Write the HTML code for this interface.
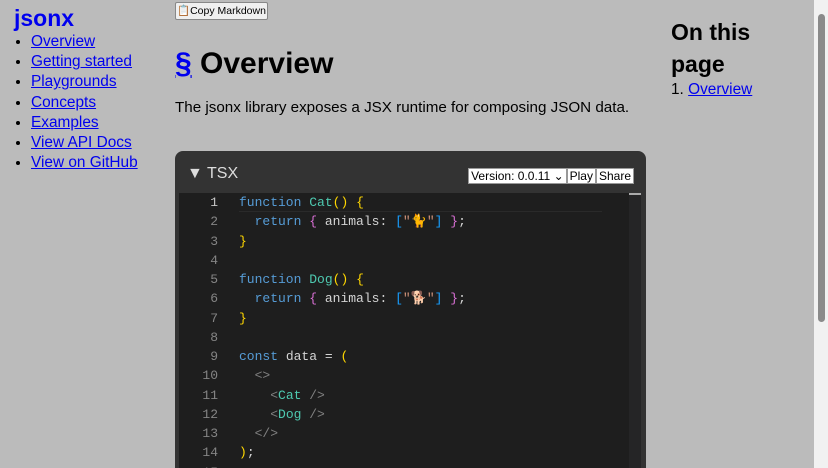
<!DOCTYPE html>
<html style="overflow:hidden;height:468px"><head><meta charset="utf-8"><style>
*{box-sizing:border-box}
body{margin:0;width:828px;height:468px;overflow:hidden;background:#bbbbbb;font-family:"Liberation Sans",sans-serif;position:relative;color:#000}
a{color:#0000ee}
.side{position:absolute;left:14px;top:4px}
.side .t{font-weight:bold;font-size:23px;color:#0000ee;text-decoration:none;display:block;line-height:28px}
.side ul{margin:0;padding-left:17px;font-size:15.4px;line-height:20.2px}
.btn{position:absolute;left:175px;top:2px;width:93px;height:18px;background:#f0f0f0;border:1px solid #888;border-radius:2px;font-size:10.5px;line-height:16px;padding-left:1px;white-space:nowrap;overflow:hidden}
h1{position:absolute;left:175px;top:44px;margin:0;font-size:30px;line-height:40px}
p.i{position:absolute;left:175px;top:99px;margin:0;font-size:15.2px}
.right{position:absolute;left:671px;top:16px}
.right h2{margin:0;font-size:23px;line-height:32px;width:110px}
.right div{font-size:15.4px;line-height:20px}
.code{position:absolute;left:175px;top:151px;width:471px;height:317px;background:#333;border-radius:8px 8px 0 0;overflow:hidden}
.hd{position:absolute;left:12px;top:14px;color:#ddd;font-size:16px}
.ctl{position:absolute;right:12px;top:17px;font-size:12px;display:flex}
.ctl span{background:#fff;border:1px solid #999;height:16px;line-height:14px;padding:0 2px;color:#000}
.ed{position:absolute;left:4px;top:42px;width:462px;height:275px;overflow:hidden;background:#1e1e1e;font-family:"Liberation Mono",monospace;font-size:13px}
.ln{position:absolute;left:0;width:39px;text-align:right;color:#858585}
.cl{position:absolute;left:60px;color:#d4d4d4;white-space:pre}
.k{color:#569cd6}.f{color:#4ec9b0}.y{color:#ffd700}.p{color:#da70d6}.b{color:#179fff}.s{color:#ce9178}.g{color:#808080}
.sb{position:absolute;right:0;top:0;width:14px;height:468px;background:#f1f1f1}
.sb i{position:absolute;left:4px;top:14px;width:7px;height:308px;background:#8a8a8a;border-radius:4px}
</style></head><body>
<div class="side"><a class="t" href="#">jsonx</a>
<ul><li><a href="#">Overview</a></li><li><a href="#">Getting started</a></li><li><a href="#">Playgrounds</a></li><li><a href="#">Concepts</a></li><li><a href="#">Examples</a></li><li><a href="#">View API Docs</a></li><li><a href="#">View on GitHub</a></li></ul></div>
<div class="btn">📋Copy Markdown</div>
<h1><a href="#">§</a> Overview</h1>
<p class="i">The jsonx library exposes a JSX runtime for composing JSON data.</p>
<div class="right"><h2>On this page</h2><div>1. <a href="#">Overview</a></div></div>
<div class="code">
<div class="hd">▼ TSX</div>
<div class="ctl"><span>Version: 0.0.11 ⌄</span><span>Play</span><span>Share</span></div>
<div class="ed">
<div style="position:absolute;left:60px;top:0;width:363px;height:19px;border-bottom:1px solid #2a2a2a"></div>
<div style="position:absolute;left:450px;top:0;width:12px;height:275px;background:#252526"></div>
<div style="position:absolute;left:450px;top:0;width:12px;height:2px;background:#aaa"></div>
<div id="c"></div>
</div></div>
<div class="sb"><i></i></div>
<script>
var L=['<span class=k>function</span> <span class=f>Cat</span><span class=y>()</span> <span class=y>{</span>',
'  <span class=k>return</span> <span class=p>{</span> animals: <span class=b>[</span><span class=s>"🐈"</span><span class=b>]</span> <span class=p>}</span>;',
'<span class=y>}</span>','',
'<span class=k>function</span> <span class=f>Dog</span><span class=y>()</span> <span class=y>{</span>',
'  <span class=k>return</span> <span class=p>{</span> animals: <span class=b>[</span><span class=s>"🐕"</span><span class=b>]</span> <span class=p>}</span>;',
'<span class=y>}</span>','',
'<span class=k>const</span> data = <span class=y>(</span>',
'  <span class=g>&lt;&gt;</span>',
'    <span class=g>&lt;</span><span class=f>Cat</span> <span class=g>/&gt;</span>',
'    <span class=g>&lt;</span><span class=f>Dog</span> <span class=g>/&gt;</span>',
'  <span class=g>&lt;/&gt;</span>',
'<span class=y>)</span>;',''];
var h='';for(var i=0;i<L.length;i++){var t=i*19.25+2;h+='<div class=ln style="top:'+t+'px;'+(i==0?'color:#c6c6c6':'')+'">'+(i+1)+'</div><div class=cl style="top:'+t+'px">'+L[i]+'</div>';}
document.getElementById('c').innerHTML=h;
</script>
</body></html>
